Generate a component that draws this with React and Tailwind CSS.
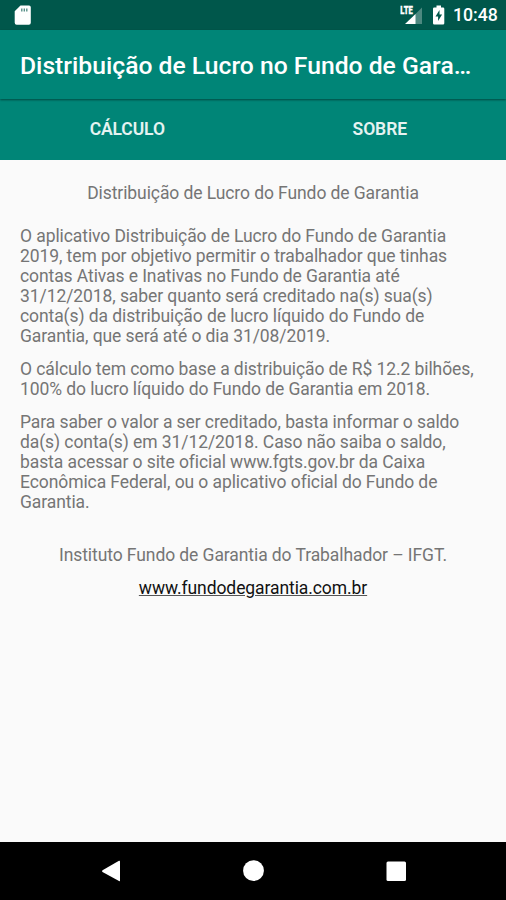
const lines = [
  ['mt-[23px]', ['O aplicativo Distribuição de Lucro do Fundo de Garantia', '2019, tem por objetivo permitir o trabalhador que tinhas', 'contas Ativas e Inativas no Fundo de Garantia até', '31/12/2018, saber quanto será creditado na(s) sua(s)', 'conta(s) da distribuição de lucro líquido do Fundo de', 'Garantia, que será até o dia 31/08/2019.']],
  ['mt-[13px]', ['O cálculo tem como base a distribuição de R$ 12.2 bilhões,', '100% do lucro líquido do Fundo de Garantia em 2018.']],
  ['mt-[13px]', ['Para saber o valor a ser creditado, basta informar o saldo', 'da(s) conta(s) em 31/12/2018. Caso não saiba o saldo,', 'basta acessar o site oficial www.fgts.gov.br da Caixa', 'Econômica Federal, ou o aplicativo oficial do Fundo de', 'Garantia.']],
];

function StatusBar() {
  return (
    <div className="flex h-[30px] items-center bg-[#00574b] text-white">
      <svg className="ml-[14px]" width="18" height="20" viewBox="0 0 18 20">
        <path fill="white" d="M6.5 .5H15a1.8 1.8 0 0 1 1.8 1.8v15.4a2 2 0 0 1-2 2H2.7a2 2 0 0 1-2-2V6.3z" />
        <path stroke="#00574b" strokeOpacity=".7" strokeWidth="1.3" d="M7.8 3.5v3M10.3 3.5v3M12.8 3.5v3" />
      </svg>
      <svg className="ml-auto" width="24" height="20" viewBox="0 0 24 20">
        <path fill="#4d8980" d="M22 2.5V19H15V9.500z" />
        <path fill="white" d="M15.500 9v10H5z" />
        <path fill="#00574b" d="M0 0h13v10.500H0z" />
        <text x="0.300" y="9" fontFamily="Roboto" fontSize="10.500" fontWeight="900" fill="white" stroke="white" strokeWidth=".3" textLength="12.500" lengthAdjust="spacingAndGlyphs">LTE</text>
      </svg>
      <svg className="ml-2" width="14" height="20" viewBox="0 0 14 20">
        <path fill="white" d="M4.500 .5h4.500v2h2a1.300 1.300 0 0 1 1.300 1.300v14.400a1.300 1.300 0 0 1-1.300 1.300H2.300A1.300 1.300 0 0 1 1 18.200V3.800a1.300 1.300 0 0 1 1.300-1.300h2.200z" />
        <path fill="#00574b" d="M7.500 5 3.500 11.500h2.600V16l4-6.500H7.500z" />
      </svg>
      <span className="ml-[7px] mr-[10px] mt-px w-[43px] text-[17.7px] font-medium">10:48</span>
    </div>
  );
}

export default function App() {
  return (
    <div className="flex h-[900px] w-[506px] flex-col overflow-hidden bg-[#fafafa] font-['Roboto',sans-serif] text-[#757575]">
      <StatusBar />
      <header className="z-10 flex h-[69px] items-center bg-[#008577] pl-5 pt-[2px] text-[24.7px] font-medium text-white shadow-[0_1px_2px_rgba(0,0,0,0.45)]">
        <h1 className="whitespace-nowrap">Distribuição de Lucro no Fundo de Gara…</h1>
      </header>
      <nav className="grid h-[61px] grid-cols-2 items-center bg-[#008577] pl-px text-center text-[17.5px] font-semibold tracking-[-0.1px] text-[#e5f3f1]">
        <span>CÁLCULO</span>
        <span>SOBRE</span>
      </nav>
      <main className="flex-1 whitespace-nowrap px-5 pt-[23px] text-[17.5px] leading-[20px] tracking-[-0.085px]">
        <p className="text-center">Distribuição de Lucro do Fundo de Garantia</p>
        {lines.map(([margin, rows]) => (
          <div key={rows[0]} className={margin}>
            {rows.map((row) => <p key={row}>{row}</p>)}
          </div>
        ))}
        <p className="mt-[33px] text-center">Instituto Fundo de Garantia do Trabalhador – IFGT.</p>
        <p className="mt-[13px] text-center text-[#111]"><a className="underline decoration-[#555]">www.fundodegarantia.com.br</a></p>
      </main>
      <footer className="flex h-[58px] items-center bg-black">
        <svg className="ml-[101px]" width="20" height="22"><path fill="white" d="M1.500 10.200 18 .8q1-.5 1 .6v19.200q0 1-1 .5L1.500 12q-1-.9 0-1.800z" /></svg>
        <svg className="ml-[121px]" width="22" height="22"><circle cx="11.500" cy="10.700" r="10.400" fill="white" /></svg>
        <svg className="ml-[122px]" width="22" height="22"><rect x=".5" y="1.500" width="19.500" height="19.500" rx="1.500" fill="white" /></svg>
      </footer>
    </div>
  );
}
